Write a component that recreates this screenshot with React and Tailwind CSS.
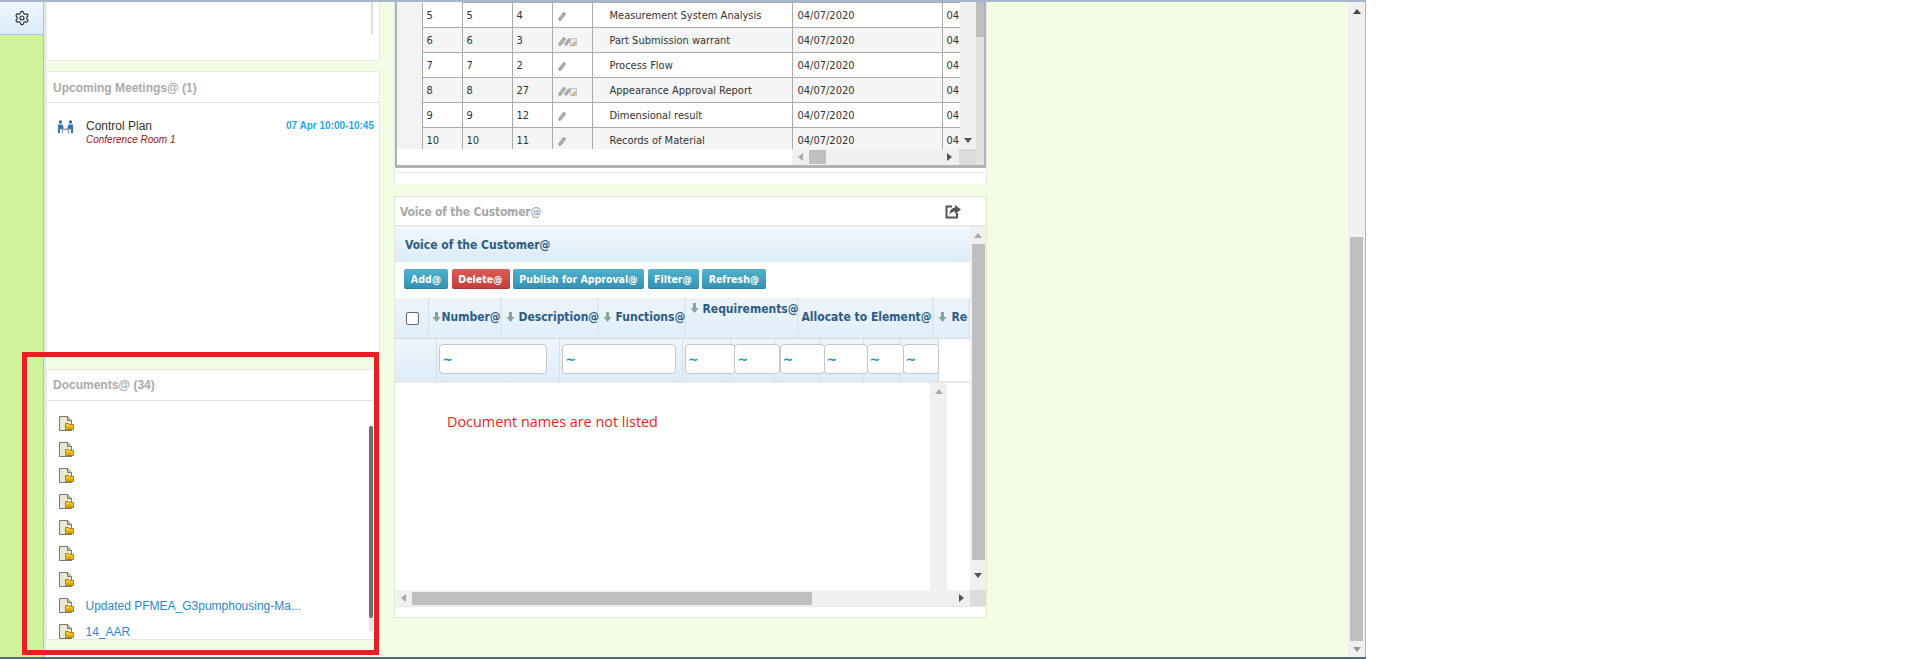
import React from "react";
import { Settings } from "lucide-react";

const tf = "font-['DejaVu_Sans',sans-serif] [font-stretch:condensed]";

function Clip({ double }) {
  return (
    <svg width="24" height="12" viewBox="0 0 24 12" className="block">
      <path d="M3 9 L7 4" stroke="#a2a2a2" strokeWidth="3.6" strokeLinecap="round" />
      <path d="M3.5 8 L6.5 4.5" stroke="#d0d0d0" strokeWidth="0.8" />
      {double && (
        <>
          <path d="M9 9 L12 5" stroke="#a8a8a8" strokeWidth="3.4" strokeLinecap="round" />
          <rect x="13.5" y="3.5" width="6" height="7" fill="#e6ecf5" stroke="#b4b4b4" strokeWidth="0.7" />
          <path d="M14.5 10.5 L18 6.5 L19.5 7.5 L16 11Z" fill="#d99a3a" />
        </>
      )}
    </svg>
  );
}

function DocIcon() {
  return (
    <svg width="15" height="15" viewBox="0 0 15 15" className="block shrink-0">
      <path d="M0.5 0.5 H8.5 L12.5 4.5 V14.5 H0.5Z" fill="#ebe6d6" stroke="#7d7768" />
      <path d="M8.5 0.5 V4.5 H12.5" fill="#cfc9b6" stroke="#7d7768" />
      <path d="M6.5 7.5 H9.5 L10.5 8.5 H14.5 V13.5 H6.5Z" fill="#f5cb2a" stroke="#a5850f" />
      <rect x="7.5" y="10.5" width="6" height="2.5" fill="#dda70f" />
    </svg>
  );
}

function MeetingIcon() {
  return (
    <svg width="17" height="14" viewBox="0 0 17 14" className="block">
      <circle cx="3.5" cy="2" r="1.7" fill="#2c6fa8" />
      <circle cx="13.5" cy="2" r="1.7" fill="#2c6fa8" />
      <path d="M1 4.5 H5.5 L7 9 H3 V13 H1Z" fill="#2c78b8" />
      <path d="M16 4.5 H11.5 L10 9 H14 V13 H16Z" fill="#2c78b8" />
      <rect x="4" y="8.5" width="9" height="1.5" fill="#8d9bab" />
      <path d="M5.5 10 V13 M11.5 10 V13" stroke="#8d9bab" strokeWidth="1.2" />
    </svg>
  );
}

function Sort() {
  return (
    <svg width="9" height="10" viewBox="0 0 9 10" className="block shrink-0">
      <path d="M3 0 H6 V5 H8.5 L4.5 10 L0.5 5 H3Z" fill="#8ba39d" />
    </svg>
  );
}

const Tri = ({ dir, color }) => {
  const d = { up: "M0 5 L4 0 L8 5Z", down: "M0 0 L8 0 L4 5Z" }[dir];
  return (
    <svg width="8" height="5" viewBox="0 0 8 5" className="block">
      <path d={d} fill={color} />
    </svg>
  );
};

const TriH = ({ dir, color }) => (
  <svg width="5" height="8" viewBox="0 0 5 8" className="block">
    <path d={dir === "left" ? "M5 0 V8 L0 4Z" : "M0 0 V8 L5 4Z"} fill={color} />
  </svg>
);

const rows = [
  ["5", "5", "4", false, "Measurement System Analysis"],
  ["6", "6", "3", true, "Part Submission warrant"],
  ["7", "7", "2", false, "Process Flow"],
  ["8", "8", "27", true, "Appearance Approval Report"],
  ["9", "9", "12", false, "Dimensional result"],
  ["10", "10", "11", false, "Records of Material"],
];

const td = "border border-[#aaaaaa] px-[4px] pt-[2px] align-middle whitespace-nowrap overflow-hidden";

function Table() {
  return (
    <table className={`table-fixed border-collapse w-[538px] text-[11px] text-[#333] ${tf}`}>
      <colgroup>
        <col className="w-[40px]" />
        <col className="w-[50px]" />
        <col className="w-[40px]" />
        <col className="w-[40px]" />
        <col className="w-[200px]" />
        <col className="w-[150px]" />
        <col className="w-[18px]" />
      </colgroup>
      <tbody>
        {rows.map((r, i) => (
          <tr key={i} className={`h-[25px] ${i % 2 ? "bg-[#f5f5f5]" : "bg-white"}`}>
            <td className={`${td} border-t-0`}>{r[0]}</td>
            <td className={td}>{r[1]}</td>
            <td className={td}>{r[2]}</td>
            <td className={td}><Clip double={r[3]} /></td>
            <td className={`${td} pl-[17px]`}>{r[4]}</td>
            <td className={`${td} pl-[5px]`}>04/07/2020</td>
            <td className={`${td} border-r-0`}>04</td>
          </tr>
        ))}
      </tbody>
    </table>
  );
}

function TopGrid() {
  return (
    <div className="bg-white border-x border-[#e8e8e8] h-[182px] flex flex-col">
      <div className="h-[166px] border-x-2 border-b-[3px] border-[#b2b2b2] flex">
        <div className="w-[579px] flex flex-col">
          <div className="h-[147px] flex overflow-hidden">
            <div className="w-[24.5px] bg-[#f3f3f3] shrink-0" />
            <div className="w-[538px] shrink-0 overflow-hidden"><Table /></div>
            <div className="w-[16.5px] bg-[#f0f0f0] flex flex-col items-center justify-end pb-[6px]">
              <Tri dir="down" color="#555" />
            </div>
          </div>
          <div className="h-[16px] flex">
            <div className="w-[395px] bg-white" />
            <div className="w-[167px] bg-[#f0f0f0] flex items-center pl-[6px]">
              <TriH dir="left" color="#aaa" />
              <div className="ml-[6px] w-[17px] h-[14px] bg-[#bfbfbf]" />
              <div className="flex-1" />
              <div className="mr-[7px]"><TriH dir="right" color="#555" /></div>
            </div>
            <div className="w-[17px] bg-[#dcdcdc]" />
          </div>
        </div>
        <div className="flex-1 bg-[#e2e2e2]">
          <div className="h-[35px] bg-[#bfbfbf]" />
        </div>
      </div>
      <div className="h-[4px]" />
      <div className="h-[1px] bg-[#e8e8e8]" />
    </div>
  );
}

const btn = "h-[20px] rounded-[2px] text-white font-bold text-[10.5px] pt-[3px] flex items-center justify-center whitespace-nowrap shrink-0 border-b border-[#2a7f9c] bg-gradient-to-b from-[#4fb2cf] to-[#3592b2]";
const hd = "flex items-center h-full pb-[2px] border-r-2 border-[#e0e8ef] text-[12px] font-bold text-[#2c5c86] whitespace-nowrap shrink-0";
const inp = "h-[30px] bg-white border border-[#c8c8c8] rounded-[4px] text-[14px] leading-[14px] font-bold text-[#2a9ab8] pl-[2px] pb-[1px] flex items-center shrink-0 relative";

function Grid2() {
  return (
    <div className={`flex-1 min-w-0 flex flex-col ${tf}`}>
      <div className="h-[34px] mt-[1px] bg-gradient-to-b from-[#f0f7fd] to-[#dcebf8] flex items-center pl-[10px] text-[12px] font-bold text-[#2c5c86]">
        Voice of the Customer@
      </div>
      <div className="h-[36px] flex items-center gap-[3.5px] pl-[9px] pb-[2px]">
        <div className={`${btn} w-[44px]`}>Add@</div>
        <div className={`${btn} w-[58px] !from-[#dd5a55] !to-[#c2403c] !border-[#a33]`}>Delete@</div>
        <div className={`${btn} w-[131px]`}>Publish for Approval@</div>
        <div className={`${btn} w-[51px]`}>Filter@</div>
        <div className={`${btn} w-[64px]`}>Refresh@</div>
      </div>
      <div className="h-[40px] flex bg-gradient-to-b from-[#edf5fc] to-[#e0edf9] overflow-hidden">
        <div className="w-[33.5px] shrink-0 flex items-center justify-center border-r border-[#d5dfe8] pl-[3px]">
          <div className="w-[13px] h-[13px] bg-white border border-[#666] rounded-[2px]" />
        </div>
        <div className={`${hd} w-[73px] pl-[3px]`}><Sort /><span className="ml-[1px]">Number@</span></div>
        <div className={`${hd} w-[97px] pl-[4px]`}><Sort /><span className="ml-[4px]">Description@</span></div>
        <div className={`${hd} w-[87px] pl-[4px]`}><Sort /><span className="ml-[4px]">Functions@</span></div>
        <div className={`${hd} w-[113px] pl-[4px] !items-start pt-[2px]`}><div className="mt-[3px]"><Sort /></div><span className="ml-[4px]">Requirements@</span></div>
        <div className={`${hd} w-[135px] pl-[3px]`}>Allocate to Element@</div>
        <div className={`${hd} flex-1 min-w-0 overflow-hidden border-r-0 pl-[4px]`}><Sort /><span className="ml-[5px]">Rec</span></div>
      </div>
      <div className="h-[1px] bg-[#dcdcdc]" />
      <div className="h-[42px] w-[544px] flex bg-gradient-to-b from-[#eef6fc] to-[#dfecf8] border-r border-[#d5dfe8]">
        <div className="w-[41.7px] shrink-0 border-r border-[#d5dfe8]" />
        <div className="w-[123px] shrink-0 border-r border-[#d5dfe8] flex items-center pl-[2.5px] pb-[2px]"><div className={`${inp} w-[108px]`}>~</div></div>
        <div className="w-[123px] shrink-0 border-r border-[#d5dfe8] flex items-center pl-[2.5px] pb-[2px]"><div className={`${inp} w-[114px]`}>~</div></div>
        <div className="w-[48.4px] shrink-0 border-r border-[#d5dfe8] flex items-center pl-[2.4px] pb-[2px]"><div className={`${inp} w-[50.5px]`}>~</div></div>
        <div className="w-[44px] shrink-0 border-r border-[#d5dfe8] flex items-center pl-[3.4px] pb-[2px]"><div className={`${inp} w-[45.6px]`}>~</div></div>
        <div className="w-[45px] shrink-0 border-r border-[#d5dfe8] flex items-center pl-[4.5px] pb-[2px]"><div className={`${inp} w-[45px]`}>~</div></div>
        <div className="w-[43.5px] shrink-0 border-r border-[#d5dfe8] flex items-center pl-[3.5px] pb-[2px]"><div className={`${inp} w-[44.5px]`}>~</div></div>
        <div className="w-[36.5px] shrink-0 border-r border-[#d5dfe8] flex items-center pl-[3px] pb-[2px]"><div className={`${inp} w-[37px]`}>~</div></div>
        <div className="flex-1 flex items-center pl-[2.5px] pb-[2px]"><div className={`${inp} w-[36px]`}>~</div></div>
      </div>
      <div className="h-[2px] bg-[#e8e8e8]" />
      <div className="h-[207px] flex bg-white">
        <div className="w-[535px] shrink-0 pl-[52px] pt-[27px]">
          <span className="font-['Open_Sans',sans-serif] [font-stretch:normal] text-[14.4px] leading-[20px] text-[#ed1c24] whitespace-nowrap">Document names are not listed</span>
        </div>
        <div className="w-[17px] shrink-0 bg-[#f0f0f0] flex justify-center pt-[6px]">
          <Tri dir="up" color="#aaa" />
        </div>
      </div>
    </div>
  );
}

function Card2() {
  return (
    <div className="mt-[12px] h-[422px] bg-white border border-[#e6e8dc] flex flex-col">
      <div className="h-[30px] shrink-0 flex items-center justify-between pl-[5px] pr-[25px] border-b-2 border-[#e8e8e8]">
        <span className={`text-[12px] pt-[2px] font-bold tracking-[-0.2px] text-[#a8a8a8] ${tf}`}>Voice of the Customer@</span>
        <svg width="16" height="15" viewBox="0 0 16 15" className="block">
          <path d="M12 9 V13.5 H1.5 V2.5 H7" fill="none" stroke="#555" strokeWidth="2" />
          <path d="M10 1 L16 5.5 L10 10 V7.5 Q6 7.5 4.5 11 Q4.5 4 10 3.5Z" fill="#555" />
        </svg>
      </div>
      <div className="h-[363px] shrink-0 flex">
        <Grid2 />
        <div className="w-[16px] shrink-0 bg-[#f0f0f0] flex flex-col items-center">
          <div className="h-[17px] flex items-center"><Tri dir="up" color="#aaa" /></div>
          <div className="w-[13px] h-[316px] bg-[#bfbfbf]" />
          <div className="flex-1 flex items-center"><Tri dir="down" color="#555" /></div>
        </div>
      </div>
      <div className="h-[17px] shrink-0 flex bg-[#f0f0f0] border-b border-[#e8e8e8]">
        <div className="w-[575px] flex items-center pl-[6px]">
          <TriH dir="left" color="#aaa" />
          <div className="ml-[6px] w-[400px] h-[13px] bg-[#bfbfbf]" />
          <div className="flex-1" />
          <div className="mr-[6px]"><TriH dir="right" color="#555" /></div>
        </div>
        <div className="flex-1 bg-[#dcdcdc]" />
      </div>
    </div>
  );
}

const docNames = ["", "", "", "", "", "", "", "Updated PFMEA_G3pumphousing-Ma...", "14_AAR"];

function LeftCol() {
  return (
    <div className="w-[334px] shrink-0 flex flex-col font-['Liberation_Sans',sans-serif]">
      <div className="h-[59px] bg-white border-x border-b border-[#e8eadf] flex justify-end pr-[6px]">
        <div className="w-[2px] h-[32px] bg-[#dddddd]" />
      </div>
      <div className="mt-[10px] h-[287px] bg-white border border-[#e8eadf] flex flex-col">
        <div className="h-[31px] shrink-0 border-b border-[#e2e2e2] flex items-center pl-[6px] pt-[1px] text-[12px] font-bold text-[#aaaaaa]">
          Upcoming Meetings@ (1)
        </div>
        <div className="flex pl-[10px] pr-[5px] pt-[16px]">
          <div className="w-[29px] shrink-0 pt-[1px]"><MeetingIcon /></div>
          <div className="flex-1">
            <div className="text-[12px] leading-[14px] text-[#333]">Control Plan</div>
            <div className="text-[10px] leading-[14px] italic text-[#a81010]">Conference Room 1</div>
          </div>
          <div className="text-[10px] leading-[14px] font-bold text-[#1ea7ee]">07 Apr 10:00-10:45</div>
        </div>
      </div>
      <div className="mt-[11px] flex-1 bg-white border border-[#e8eadf] flex flex-col relative">
        <div className="h-[31px] shrink-0 border-b border-[#e2e2e2] flex items-center pl-[6px] text-[12px] font-bold text-[#aaaaaa]">
          Documents@ (34)
        </div>
        <div className="flex-1 flex relative">
          <div className="flex-1 flex flex-col pl-[12px] pt-[15px] gap-[11px]">
            {docNames.map((n, i) => (
              <div key={i} className="h-[15px] flex items-center">
                <DocIcon />
                <span className="ml-[11.5px] text-[12px] text-[#2a88d0] whitespace-nowrap">{n}</span>
              </div>
            ))}
          </div>
          <div className="w-[4px] mr-[6px] flex flex-col mt-[25px] h-[205px] bg-[#e4e4e4]">
            <div className="h-[192px] bg-[#6d6d6d] rounded-[2px]" />
          </div>
        </div>
      </div>
    </div>
  );
}

export default function App() {
  return (
    <div className="w-[1924px] h-[659px] bg-white relative overflow-hidden">
      <div className="w-[1366px] h-full flex flex-col">
        <div className="h-[2px] shrink-0 bg-[#a4b7cf]" />
        <div className="flex-1 min-h-0 flex">
          <div className="w-[44px] shrink-0 bg-[#cff39a] border-r border-[#a9bfd6]">
            <div className="h-[33px] bg-gradient-to-b from-[#f0f7fd] to-[#dcebf9] border-b border-[#a9c4de] flex items-center justify-center pb-[1px]">
              <Settings size={16} strokeWidth={1.6} color="#222" />
            </div>
          </div>
          <div className="w-[2px] shrink-0 bg-[#dfe9f2]" />
          <div className="flex-1 min-w-0 bg-[#f3fde3] flex items-start">
            <LeftCol />
            <div className="ml-[14px] w-[593px] shrink-0">
              <TopGrid />
              <Card2 />
            </div>
          </div>
          <div className="w-[17px] shrink-0 bg-[#f0f0f0] flex flex-col items-center">
            <div className="h-[18px] flex items-center pt-[1px]"><Tri dir="up" color="#444" /></div>
            <div className="mt-[217px] w-[13px] flex-1 bg-[#bfbfbf]" />
            <div className="h-[16px] flex items-center"><Tri dir="down" color="#999" /></div>
          </div>
          <div className="w-[1px] shrink-0 bg-[#9db8d4]" />
        </div>
        <div className="h-[2px] shrink-0 bg-[#556a72]" />
      </div>
      <div className="absolute left-[22px] top-[352px] w-[357px] h-[303px] border-[5px] border-[#ed1c24] pointer-events-none" />
    </div>
  );
}
